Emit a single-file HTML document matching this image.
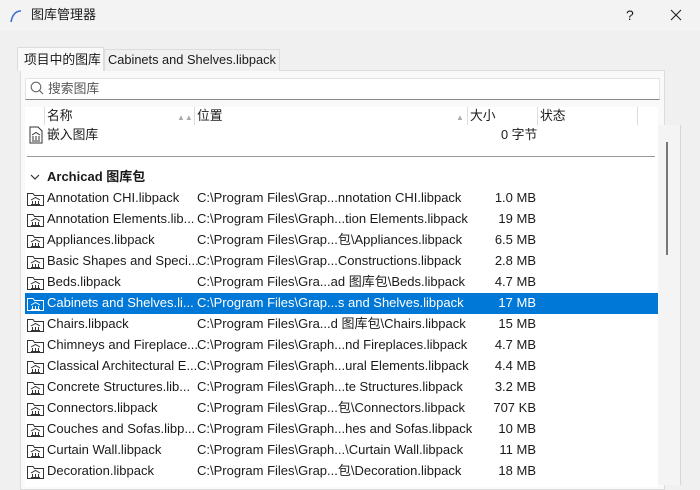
<!DOCTYPE html>
<html><head><meta charset="utf-8"><style>
*{box-sizing:border-box;margin:0;padding:0}
body{width:700px;height:482px;overflow:hidden;background:#f0f0f0;font-family:"Liberation Sans","Noto Sans CJK SC",sans-serif;font-size:12.8px;line-height:16px;color:#1a1a1a;position:relative}
.abs{position:absolute}
.title{left:0;top:0;width:700px;height:31px;background:#f3f3f3}
.panel{left:20px;top:70px;width:645px;height:420px;background:#f9f9f9;border:1px solid #dcdcdc}
.tab1{left:17px;top:47px;width:87px;height:24px;background:#f9f9f9;border:1px solid #dcdcdc;border-bottom:none;padding:4px 0 0 6px}
.tab2{left:104px;top:49px;width:176px;height:22px;background:#f0f0f0;border:1px solid #dcdcdc;border-bottom:none;padding:2px 0 0 3px}
.search{left:25px;top:78px;width:635px;height:22px;background:#fff;border:1px solid #e3e3e3;border-bottom:1px solid #888;padding:2px 0 0 22px;color:#555}
.list{left:25px;top:107px;width:633px;height:380px;background:#fff}
.sb{left:658px;top:125px;width:23px;height:360px;background:#f4f4f4;border-right:1px solid #d6d6d6}
.row{position:absolute;left:25px;width:633px;height:21px;line-height:21px;white-space:nowrap;font-size:13px}
.row span{position:absolute}
.sel{background:#0078d7;color:#fff}
.ic{left:2px;top:3px;width:17px;height:15px}
</style></head><body>
<div class="abs title"></div>
<svg class="abs" style="left:9px;top:9px" width="14" height="14"><path d="M2 13 Q4 2 12 2" stroke="#3a6fd0" stroke-width="1.6" fill="none"/></svg>
<div class="abs" style="left:31px;top:7px;font-size:13px">图库管理器</div>
<div class="abs" style="left:626px;top:7px;font-size:14px">?</div>
<svg class="abs" style="left:670px;top:9px" width="12" height="12"><path d="M1 1L11 11M11 1L1 11" stroke="#222" stroke-width="1.1"/></svg>
<div class="abs panel"></div>
<div class="abs tab1">项目中的图库</div>
<div class="abs tab2">Cabinets and Shelves.libpack</div>
<div class="abs search">搜索图库</div>
<svg class="abs" style="left:30px;top:81px" width="14" height="14"><circle cx="6" cy="6" r="4.8" stroke="#666" fill="none" stroke-width="1.1"/><path d="M9.5 9.5L13 13" stroke="#666" stroke-width="1.2"/></svg>
<div class="abs list"></div>
<div class="abs sb"></div>
<div class="abs" style="left:666px;top:142px;width:2px;height:113px;background:#777"></div>
<div class="abs" style="left:44px;top:107px;width:1px;height:18px;background:#ddd"></div>
<div class="abs" style="left:194px;top:107px;width:1px;height:18px;background:#ddd"></div>
<div class="abs" style="left:467px;top:107px;width:1px;height:18px;background:#ddd"></div>
<div class="abs" style="left:537px;top:107px;width:1px;height:18px;background:#ddd"></div>
<div class="abs" style="left:637px;top:107px;width:1px;height:18px;background:#ddd"></div>
<div class="abs" style="left:47px;top:108px">名称</div>
<div class="abs" style="left:177px;top:110px;font-size:8px;color:#aaa">▲▲</div>
<div class="abs" style="left:197px;top:108px">位置</div>
<div class="abs" style="left:456px;top:110px;font-size:8px;color:#aaa">▲</div>
<div class="abs" style="left:470px;top:108px">大小</div>
<div class="abs" style="left:540px;top:108px">状态</div>
<svg class="abs" style="left:29px;top:126px" width="14" height="18"><path d="M1 1H9L13 5V17H1Z" fill="#fff" stroke="#333"/><path d="M3 9L7 6.5L11 9M4 10V14M7 10V14M10 10V14M3 15H11" stroke="#333" fill="none"/></svg>
<div class="abs" style="left:47px;top:127px">嵌入图库</div>
<div class="abs" style="left:501px;top:127px">0 字节</div>
<div class="abs" style="left:27px;top:156px;width:628px;height:1px;background:#999"></div>
<svg class="abs" style="left:30px;top:173px" width="10" height="8"><path d="M1 2L5 6L9 2" stroke="#333" fill="none" stroke-width="1.2"/></svg>
<div class="abs" style="left:47px;top:169px;font-weight:bold;font-size:13px">Archicad 图库包</div>
<div id="rows"></div>
<script>
const d=[["Annotation CHI.libpack","C:\\Program Files\\Grap...nnotation CHI.libpack","1.0 MB"],
["Annotation Elements.lib...","C:\\Program Files\\Graph...tion Elements.libpack","19 MB"],
["Appliances.libpack","C:\\Program Files\\Grap...包\\Appliances.libpack","6.5 MB"],
["Basic Shapes and Speci...","C:\\Program Files\\Grap...Constructions.libpack","2.8 MB"],
["Beds.libpack","C:\\Program Files\\Gra...ad 图库包\\Beds.libpack","4.7 MB"],
["Cabinets and Shelves.li...","C:\\Program Files\\Grap...s and Shelves.libpack","17 MB"],
["Chairs.libpack","C:\\Program Files\\Gra...d 图库包\\Chairs.libpack","15 MB"],
["Chimneys and Fireplace...","C:\\Program Files\\Graph...nd Fireplaces.libpack","4.7 MB"],
["Classical Architectural E...","C:\\Program Files\\Graph...ural Elements.libpack","4.4 MB"],
["Concrete Structures.lib...","C:\\Program Files\\Graph...te Structures.libpack","3.2 MB"],
["Connectors.libpack","C:\\Program Files\\Grap...包\\Connectors.libpack","707 KB"],
["Couches and Sofas.libp...","C:\\Program Files\\Graph...hes and Sofas.libpack","10 MB"],
["Curtain Wall.libpack","C:\\Program Files\\Graph...\\Curtain Wall.libpack","11 MB"],
["Decoration.libpack","C:\\Program Files\\Grap...包\\Decoration.libpack","18 MB"]];
let h="";d.forEach((r,i)=>{const y=188+i*21,s=i==5,c=s?"#fff":"#333";
h+=`<div class="row${s?' sel':''}" style="top:${y}px"><svg class="ic" style="position:absolute" width="18" height="16"><path d="M0.5 2.5H6L7.5 4.5H16.5V14.5H0.5Z" fill="none" stroke="${c}"/><path d="M4 9L8.5 6.5L13 9M5.5 10V13M8.5 10V13M11.5 10V13M4 13.5H13" stroke="${c}" fill="none"/></svg><span style="left:22px;top:-1px">${r[0]}</span><span style="left:172px;top:-1px">${r[1]}</span><span style="right:122px;top:-1px">${r[2]}</span></div>`});
document.getElementById("rows").innerHTML=h;
</script>
</body></html>
